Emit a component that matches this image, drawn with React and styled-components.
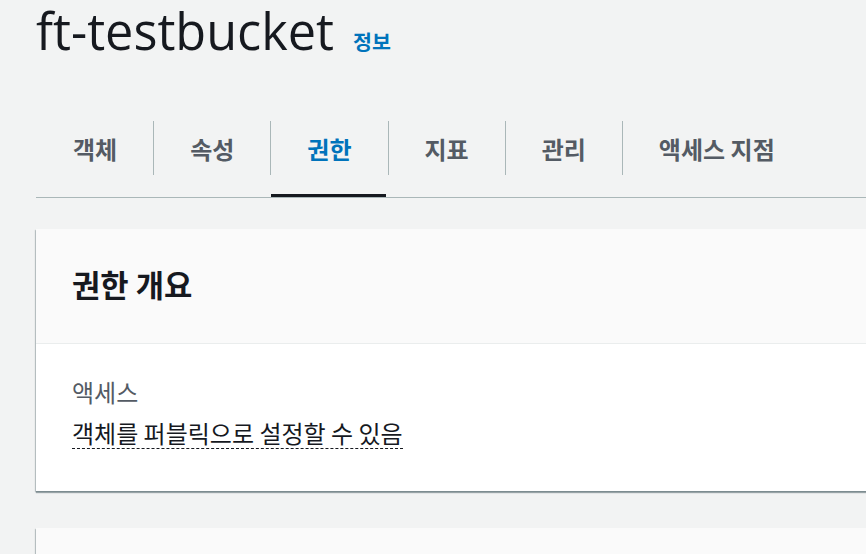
import React from 'react';
import styled, { createGlobalStyle } from 'styled-components';

const GlobalStyle = createGlobalStyle`
    html, body {
        margin: 0;
        padding: 0;
        background-color: #f2f3f3;
        overflow: hidden;
    }
    body {
        font-family: "Open Sans", "Noto Sans CJK KR", sans-serif;
        color: #16191f;
    }
`;

const Page = styled.div`
    width: 900px;
    padding-left: 36px;
    box-sizing: border-box;
`;

const TitleRow = styled.div`
    display: flex;
    align-items: baseline;
    gap: 19px;
    height: 100px;
    padding-top: 3px;
    box-sizing: border-box;

    > h1 {
        margin: 0;
        font-size: 50.4px;
        font-weight: 400;
        line-height: 56px;
        color: #16191f;
    }
`;

const InfoLink = styled.a`
    font-family: "Noto Sans CJK KR", sans-serif;
    font-size: 20.6px;
    font-weight: 700;
    color: #0073bb;
    text-decoration: none;
`;

const TabList = styled.div`
    display: flex;
    border-bottom: 1px solid #aab7b8;
`;

const Tab = styled.div`
    display: flex;
    flex-direction: column;
    padding-top: 21px;
`;

const TabLabel = styled.div`
    display: flex;
    align-items: center;
    height: 54px;
    padding: 0 36px;
    border-left: 1px solid ${p => (p.$first ? 'transparent' : '#aab7b8')};
    font-family: "Noto Sans CJK KR", sans-serif;
    font-size: 24px;
    font-weight: 700;
    color: ${p => (p.$active ? '#0073bb' : '#545b64')};
    white-space: nowrap;
`;

const Indicator = styled.div`
    height: 3px;
    margin: 19px 2px 0 1px;
    background-color: ${p => (p.$active ? '#16191f' : 'transparent')};
`;

const Card = styled.div`
    margin-top: ${p => p.$gap}px;
    background-color: #ffffff;
    box-shadow: 0 2px 1px 0 rgba(0, 28, 36, 0.35), -1px 1px 1px 0 rgba(0, 28, 36, 0.2);
`;

const CardHeader = styled.div`
    background-color: #fafafa;
    border-bottom: 1px solid #eaeded;
    padding: 36px 36px 41px;

    > h2 {
        margin: 0;
        font-family: "Noto Sans CJK KR", sans-serif;
        font-size: 30.8px;
        font-weight: 700;
        line-height: 37px;
        color: #16191f;
    }
`;

const CardBody = styled.div`
    padding: 32px 36px 42px;
    font-family: "Noto Sans CJK KR", sans-serif;
    font-size: 24px;
`;

const Label = styled.div`
    color: #545b64;
    line-height: 32px;
`;

const Value = styled.div`
    margin-top: 10px;
    line-height: 30px;

    > span {
        display: inline-block;
        color: #16191f;
        border-bottom: 1px dashed #16191f;
    }
`;

const tabs = ['객체', '속성', '권한', '지표', '관리', '액세스 지점'];

export default function App() {
    return (
        <>
            <GlobalStyle />
            <Page>
                <TitleRow>
                    <h1>ft-testbucket</h1>
                    <InfoLink href="#">정보</InfoLink>
                </TitleRow>

                <TabList>
                    {tabs.map((t, i) => (
                        <Tab key={t}>
                            <TabLabel $first={i === 0} $active={t === '권한'}>{t}</TabLabel>
                            <Indicator $active={t === '권한'} />
                        </Tab>
                    ))}
                </TabList>

                <Card $gap={31}>
                    <CardHeader>
                        <h2>권한 개요</h2>
                    </CardHeader>
                    <CardBody>
                        <Label>액세스</Label>
                        <Value><span>객체를 퍼블릭으로 설정할 수 있음</span></Value>
                    </CardBody>
                </Card>

                <Card $gap={37}>
                    <CardHeader>
                        <h2>&nbsp;</h2>
                    </CardHeader>
                </Card>
            </Page>
        </>
    );
}
